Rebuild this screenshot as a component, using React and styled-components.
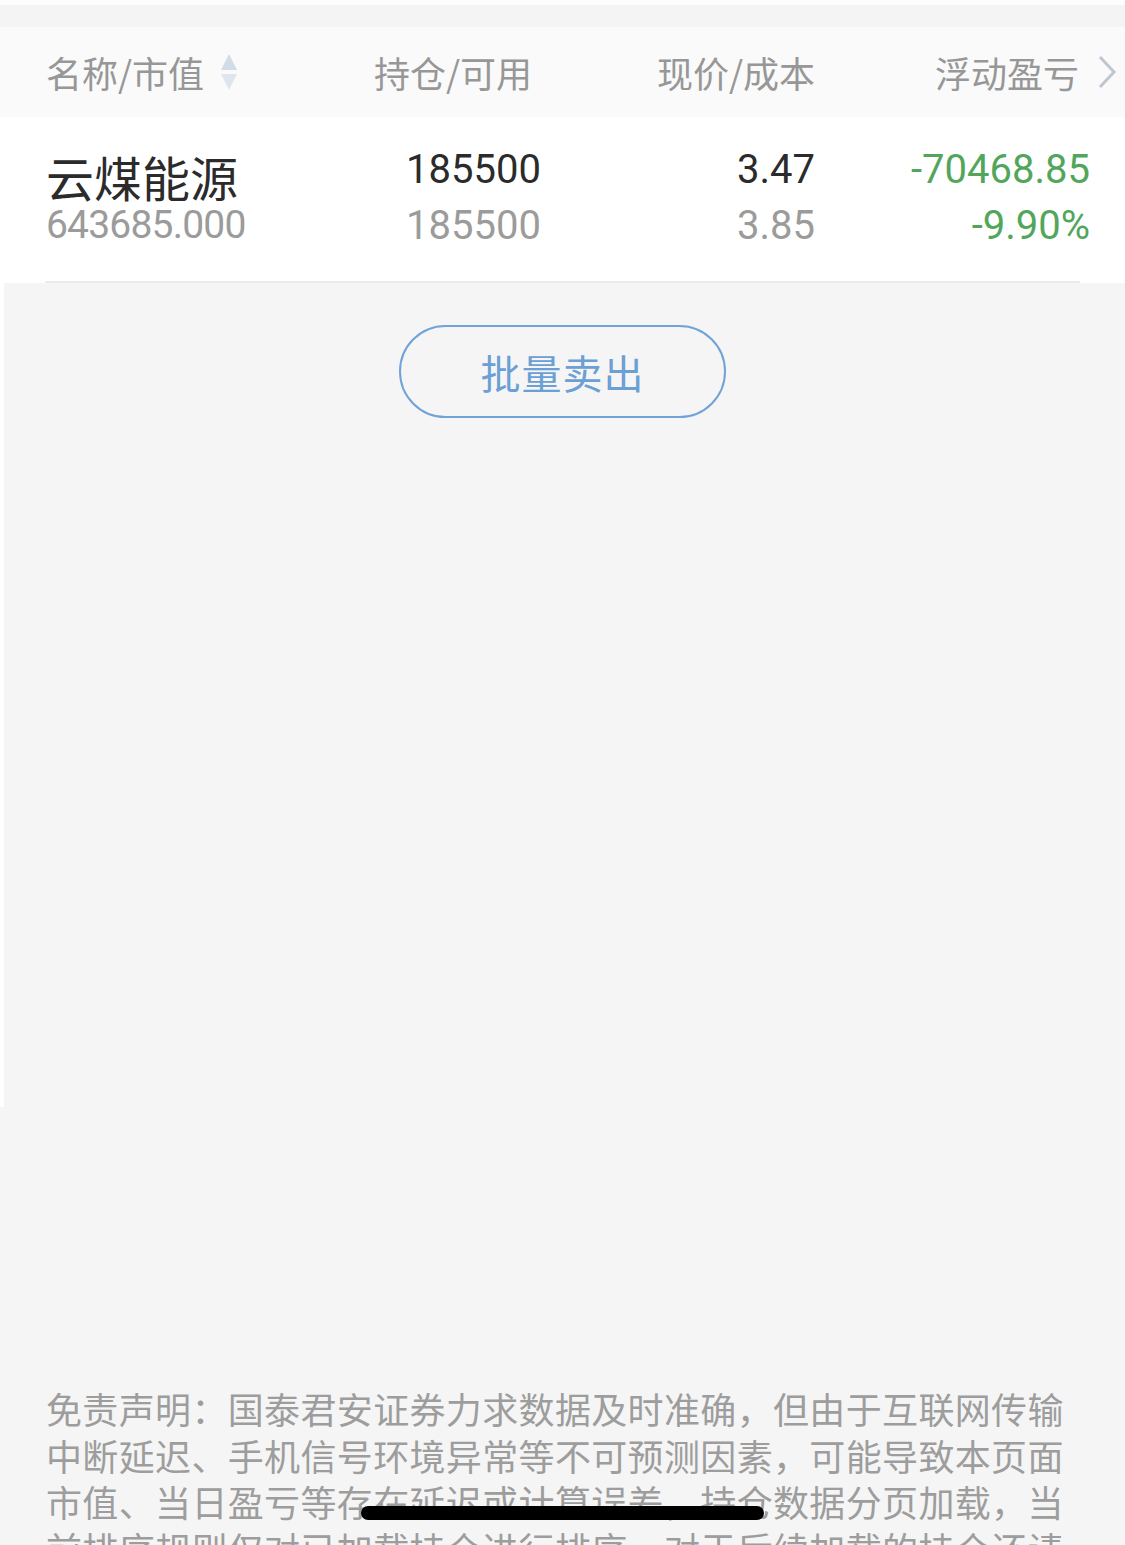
import React from 'react';
import styled, { createGlobalStyle } from 'styled-components';

const GlobalStyle = createGlobalStyle`
  html, body {
    margin: 0;
    padding: 0;
    background: #f5f5f5;
    overflow: hidden;
  }
  * { box-sizing: border-box; }
`

const CJK = `"Noto Sans CJK SC", "Noto Sans", sans-serif`;
const NUM = `Roboto, "Noto Sans", sans-serif`;

const Page = styled.div`
  height: 1545px;
  overflow: hidden;
  display: flex;
  flex-direction: column;
  background: #f5f5f5;
  font-family: ${CJK};
  & > * { flex-shrink: 0; }
`

const TopGap = styled.div`
  height: 27px;
  border-top: 5px solid #fdfdfd;
  background: #f4f4f4;
`

const Holdings = styled.section`
  height: 1080px;
  display: flex;
  flex-direction: column;
  background: #fff;
`

const Columns = styled.div`
  display: grid;
  grid-template-columns: 254px 241px 274px 1fr;
  padding: 0 35px 0 46px;
`

const Header = styled(Columns)`
  height: 90px;
  align-items: center;
  background: #fafafa;
  padding-right: 8px;
`

const HeadCell = styled.div`
  display: flex;
  align-items: center;
  justify-content: ${p => (p.$left ? 'flex-start' : 'flex-end')};
  padding-right: ${p => p.$pad || 0}px;
  font-size: 36px;
  line-height: 44px;
  color: #979797;
  white-space: nowrap;
`

const SortIcon = styled.svg`
  margin-left: 16px;
  width: 18px;
  height: 38px;
`

const Chevron = styled.svg`
  margin-left: 18px;
  width: 20px;
  height: 34px;
`

const Row = styled(Columns)`
  height: 166px;
  position: relative;
  &::after {
    content: '';
    position: absolute;
    left: 45px;
    right: 45px;
    bottom: 0;
    height: 2px;
    background: #ebebeb;
  }
`

const NameCell = styled.div`
  padding-top: 34px;
  display: flex;
  flex-direction: column;
`

const Name = styled.div`
  font-size: 48px;
  line-height: 50px;
  color: #2b2b2b;
`

const SubValue = styled.div`
  margin-top: 4px;
  font-family: ${NUM};
  font-size: 39px;
  line-height: 40px;
  letter-spacing: -0.8px;
  color: #9b9b9b;
`

const ValueCell = styled.div`
  padding-top: 25px;
  display: flex;
  flex-direction: column;
  align-items: flex-end;
  font-family: ${NUM};
  font-size: 40px;
  line-height: 56px;
`

const Value = styled.div`
  color: ${p => p.$color || '#2b2b2b'};
`

const Blank = styled.div`
  flex: 1;
  margin-left: 4px;
  background: #f5f5f5;
  display: flex;
  flex-direction: column;
  align-items: center;
`

const SellButton = styled.button`
  margin-top: 42px;
  margin-left: -4px;
  width: 327px;
  height: 93px;
  border: 2px solid #72a3d6;
  border-radius: 47px;
  background: transparent;
  color: #6c9fd4;
  font-family: ${CJK};
  font-size: 40px;
  letter-spacing: 1px;
  cursor: pointer;
`

const Disclaimer = styled.p`
  margin: 0;
  padding: 278px 40px 0 46px;
  font-size: 36px;
  line-height: 46.5px;
  letter-spacing: 0.35px;
  color: #9d9d9d;
`

const HomeBar = styled.div`
  position: fixed;
  left: 50%;
  bottom: 25px;
  width: 403px;
  height: 14px;
  margin-left: -202px;
  border-radius: 7px;
  background: #000;
`

const holding = {
  name: '云煤能源',
  marketValue: '643685.000',
  position: '185500',
  available: '185500',
  price: '3.47',
  cost: '3.85',
  profit: '-70468.85',
  ratio: '-9.90%',
};

const App = () => (
  <Page>
    <GlobalStyle />
    <TopGap />
    <Holdings>
      <Header>
        <HeadCell $left>
          名称/市值
          <SortIcon viewBox="0 0 18 38">
            <path d="M9 1 L17 17 L1 17 Z" fill="#d2dce6" />
            <path d="M1 21 L17 21 L9 37 Z" fill="#dfe5ec" />
          </SortIcon>
        </HeadCell>
        <HeadCell $pad={9}>持仓/可用</HeadCell>
        <HeadCell>现价/成本</HeadCell>
        <HeadCell>
          浮动盈亏
          <Chevron viewBox="0 0 20 34">
            <path d="M3 2 L17 17 L3 32" fill="none" stroke="#bfc7d2" strokeWidth="3" />
          </Chevron>
        </HeadCell>
      </Header>
      <Row>
        <NameCell>
          <Name>{holding.name}</Name>
          <SubValue>{holding.marketValue}</SubValue>
        </NameCell>
        <ValueCell>
          <Value>{holding.position}</Value>
          <Value $color="#9b9b9b">{holding.available}</Value>
        </ValueCell>
        <ValueCell>
          <Value>{holding.price}</Value>
          <Value $color="#9b9b9b">{holding.cost}</Value>
        </ValueCell>
        <ValueCell>
          <Value $color="#52a65c">{holding.profit}</Value>
          <Value $color="#52a65c">{holding.ratio}</Value>
        </ValueCell>
      </Row>
      <Blank>
        <SellButton>批量卖出</SellButton>
      </Blank>
    </Holdings>
    <Disclaimer>
      免责声明：国泰君安证券力求数据及时准确，但由于互联网传输中断延迟、手机信号环境异常等不可预测因素，可能导致本页面市值、当日盈亏等存在延迟或计算误差，持仓数据分页加载，当前排序规则仅对已加载持仓进行排序，对于后续加载的持仓还请以实际数据为准。
    </Disclaimer>
    <HomeBar />
  </Page>
);

export default App;
